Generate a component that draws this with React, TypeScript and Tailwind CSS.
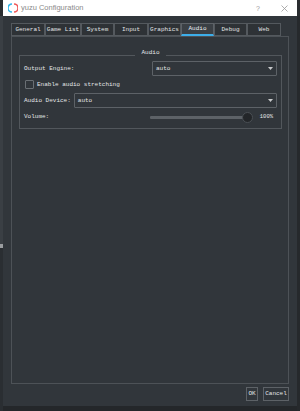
import React from "react";

const tabs: [string, number][] = [
  ["General", 34],
  ["Game List", 36],
  ["System", 33],
  ["Input", 34],
  ["Graphics", 33],
  ["Audio", 33],
  ["Debug", 33],
  ["Web", 34],
];

function Arrow() {
  return (
    <svg width="5" height="3" viewBox="0 0 5 3">
      <path d="M0 0 L5 0 L2.5 3 Z" fill="#c8cacc" />
    </svg>
  );
}

export default function App() {
  const mono = { fontFamily: '"Liberation Mono", "DejaVu Sans Mono", monospace' };
  return (
    <div className="w-[300px] h-[411px] bg-[#24272a] flex overflow-hidden" style={mono}>
      <div className="w-[3px] h-full flex flex-col">
        <div className="h-[16px] bg-[#2a2d30]" />
        <div className="h-[228px] bg-[#3a3f44]" />
        <div className="h-[4px] bg-[#9a9da0]" />
        <div className="flex-1 bg-[#2a2e32]" />
      </div>
      <div className="w-[294px] h-[406px] flex flex-col bg-[#31363b]">
        <div className="h-[16px] bg-white flex items-center shrink-0">
          <svg width="10" height="10" viewBox="0 0 10 10" className="ml-[5px]">
            <path d="M4 1 A4 4 0 0 0 4 9" stroke="#35b8ea" strokeWidth="1.6" fill="none" />
            <path d="M6 1 A4 4 0 0 1 6 9" stroke="#ef5a5a" strokeWidth="1.6" fill="none" />
          </svg>
          <span
            className="ml-[3px] text-[7.5px] text-[#8a8a8a] leading-none"
            style={{ fontFamily: '"Liberation Sans", Arial, sans-serif' }}
          >
            yuzu Configuration
          </span>
          <span
            className="ml-auto text-[7px] text-[#999] leading-none"
            style={{ fontFamily: '"Liberation Sans", Arial, sans-serif' }}
          >
            ?
          </span>
          <svg width="7" height="7" viewBox="0 0 7 7" className="ml-[21px] mr-[9px]">
            <path d="M0.5 0.5 L6.5 6.5 M6.5 0.5 L0.5 6.5" stroke="#999" strokeWidth="0.8" />
          </svg>
        </div>
        <div className="flex flex-col px-[8px] pt-[7px]">
          <div className="flex h-[13px]">
            {tabs.map(([t, w]) => {
              const sel = t === "Audio";
              return (
                <div
                  key={t}
                  style={{ width: w }}
                  className={
                    sel
                      ? "h-[13px] border border-[#5d6267] border-b-2 border-b-[#3daee9] bg-[#3b4045] flex items-center justify-center text-[6px] text-[#eceff1] leading-none"
                      : "h-[13px] border border-[#54595e] bg-[#2e3236] flex items-center justify-center text-[6px] text-[#e4e6e8] leading-none"
                  }
                >
                  {t}
                </div>
              );
            })}
          </div>
          <div className="w-[278px] h-[348px] border border-[#4d5257] bg-[#31363b] pl-[7px] pr-[6px] pt-[15px]">
            <div className="relative border border-[#52575c] h-[74px] mt-[3px]">
              <div className="absolute -top-[6px] left-0 right-0 flex justify-center">
                <span className="bg-[#31363b] px-[6px] text-[6px] leading-none text-[#e4e6e8]">Audio</span>
              </div>
              <div className="flex flex-col px-[4px] pt-[5px] text-[6px] text-[#e4e6e8] leading-none">
                <div className="flex items-center h-[15px]">
                  <span>Output Engine:</span>
                  <div className="ml-auto w-[125px] h-[15px] border border-[#5d6267] rounded-[1px] flex items-center px-[3px]">
                    <span>auto</span>
                    <span className="ml-auto">
                      <Arrow />
                    </span>
                  </div>
                </div>
                <div className="flex items-center h-[17px] pl-[1px]">
                  <div className="w-[9px] h-[9px] border border-[#6a6f74] rounded-[1px]" />
                  <span className="ml-[3px]">Enable audio stretching</span>
                </div>
                <div className="flex items-center h-[15px]">
                  <span>Audio Device:</span>
                  <div className="ml-[3px] flex-1 h-[15px] border border-[#5d6267] rounded-[1px] flex items-center px-[3px]">
                    <span>auto</span>
                    <span className="ml-auto">
                      <Arrow />
                    </span>
                  </div>
                </div>
                <div className="flex items-center h-[18px]">
                  <span>Volume:</span>
                  <div className="ml-auto flex items-center w-[104px]">
                    <div className="w-[94px] h-[3px] bg-[#5d6267] rounded-[1px]" />
                    <div className="-ml-[2px] w-[11px] h-[11px] rounded-full bg-[#232629] border border-[#4a4f54]" />
                  </div>
                  <span className="ml-[6px] mr-[4px] text-[5.5px]">100%</span>
                </div>
              </div>
            </div>
          </div>
          <div className="flex justify-end gap-[5px] mt-[3px] pr-0 w-[278px]">
            <div className="w-[12px] h-[14px] border border-[#5d6267] flex items-center justify-center text-[6px] text-[#e4e6e8] leading-none">
              OK
            </div>
            <div className="w-[26px] h-[14px] border border-[#5d6267] flex items-center justify-center text-[6px] text-[#e4e6e8] leading-none">
              Cancel
            </div>
          </div>
        </div>
      </div>
      <div className="w-[3px] h-full flex flex-col">
        <div className="h-[16px] bg-[#2a2d30]" />
        <div className="flex-1 bg-[#26292c]" />
      </div>
    </div>
  );
}
